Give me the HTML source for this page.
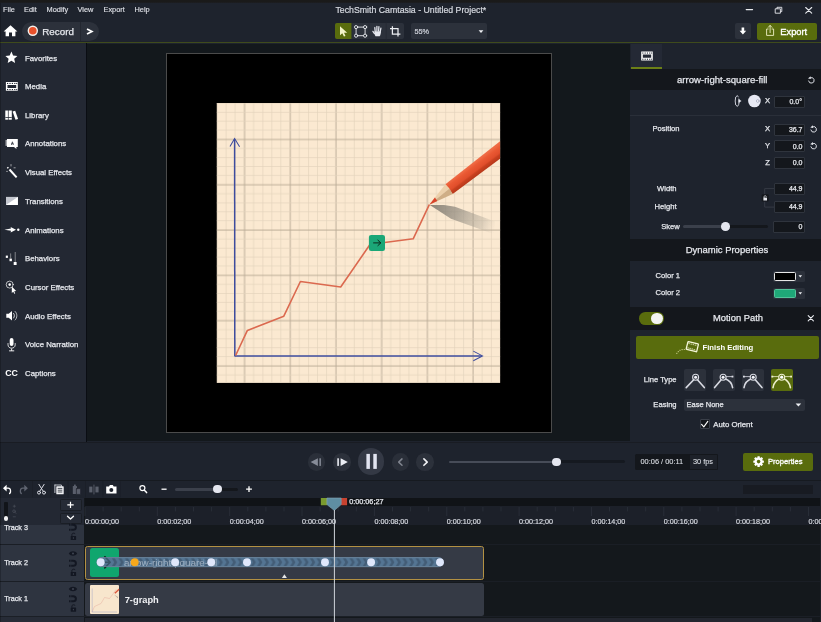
<!DOCTYPE html>
<html>
<head>
<meta charset="utf-8">
<style>
*{box-sizing:border-box;margin:0;padding:0}
html,body{width:821px;height:622px;overflow:hidden;background:#1e232d;font-family:"Liberation Sans",sans-serif;color:#eceef2}
#root{position:fixed;left:0;top:0;z-index:5;will-change:transform;width:821px;height:622px;overflow:hidden;background:#1e232d}
.a{position:absolute}
.t{position:absolute;white-space:nowrap;line-height:12px;height:12px;margin-top:-5.6px;color:#e6e8ed;-webkit-text-stroke:0.25px #e6e8ed}
.r{text-align:right}
.c{text-align:center}
svg{position:absolute;left:0;top:0;overflow:visible}
.m{font-size:7.4px;color:#dfe1e7;-webkit-text-stroke:0.12px #dfe1e7}
.sb{font-size:7.8px;left:25px;margin-top:-5.2px}
.inp{position:absolute;background:#14171c;border:1px solid #2f343d;border-radius:1px}
.lbl{font-size:7.6px}
.val{font-size:7px;text-align:right}
.rl{top:521.3px;font-size:7.2px;color:#d6d9e0;-webkit-text-stroke:0.2px #d6d9e0}
</style>
</head>
<body>
<div id="root">

<!-- ===== top bars ===== -->
<div class="a" style="left:0;top:0;width:821px;height:43px;background:#1e232d"></div>
<div class="a" style="left:0;top:0;width:821px;height:3px;background:linear-gradient(#1a1a1a,#1a1a1a 70%,#1d2027)"></div>
<div class="a" style="left:0;top:3px;width:1px;height:619px;background:rgba(0,0,0,.22);z-index:9"></div>
<div class="a" style="left:0;top:42px;width:821px;height:1px;background:#3f4b1c"></div>

<div class="t m" style="left:3px;top:9.5px">File</div>
<div class="t m" style="left:24px;top:9.5px">Edit</div>
<div class="t m" style="left:46.5px;top:9.5px">Modify</div>
<div class="t m" style="left:77.5px;top:9.5px">View</div>
<div class="t m" style="left:103.5px;top:9.5px">Export</div>
<div class="t m" style="left:134.5px;top:9.5px">Help</div>
<div class="t" style="left:335.5px;top:10px;font-size:8.76px;color:#d6d9e0;-webkit-text-stroke:0.2px #d6d9e0">TechSmith Camtasia - Untitled Project*</div>

<!-- record pill -->
<div class="a" style="left:22px;top:22px;width:77px;height:19px;border-radius:9.5px;background:#2c313b"></div>
<div class="a" style="left:80px;top:22px;width:1px;height:19px;background:#232730"></div>
<div class="t" style="left:42.3px;top:31.5px;font-size:9.8px">Record</div>

<!-- tool group -->
<div class="a" style="left:335px;top:22.500px;width:68.500px;height:16.800px;background:#2c313b;border-radius:2px"></div>
<div class="a" style="left:335px;top:22.500px;width:16.700px;height:16.800px;background:#596c0d;border-radius:2px 0 0 2px"></div>
<div class="a" style="left:410.5px;top:22.500px;width:76.5px;height:16.800px;background:#2c313b;border-radius:2px"></div>
<div class="t" style="left:414.5px;top:31.6px;font-size:7.3px;color:#cfd2da;-webkit-text-stroke:0.2px #cfd2da">55%</div>

<!-- download / export -->
<div class="a" style="left:735px;top:23px;width:16px;height:16px;background:#2c313b;border-radius:2px"></div>
<div class="a" style="left:757px;top:23px;width:59.5px;height:16.5px;background:#596c0d;border-radius:2px"></div>
<div class="t" style="left:780.3px;top:31.5px;font-size:9.3px;-webkit-text-stroke:0.35px #fff;color:#fff">Export</div>

<!-- ===== sidebar ===== -->
<div class="a" style="left:0;top:43px;width:86px;height:398.5px;background:#232833"></div>
<div class="t sb" style="top:57.7px">Favorites</div>
<div class="t sb" style="top:86.3px">Media</div>
<div class="t sb" style="top:115px">Library</div>
<div class="t sb" style="top:143.6px">Annotations</div>
<div class="t sb" style="top:172.3px">Visual Effects</div>
<div class="t sb" style="top:201px">Transitions</div>
<div class="t sb" style="top:229.7px">Animations</div>
<div class="t sb" style="top:258.3px">Behaviors</div>
<div class="t sb" style="top:287px">Cursor Effects</div>
<div class="t sb" style="top:315.7px">Audio Effects</div>
<div class="t sb" style="top:344.3px">Voice Narration</div>
<div class="t sb" style="top:373px">Captions</div>

<!-- ===== stage ===== -->
<div class="a" style="left:85.500px;top:43px;width:1.800px;height:398.5px;background:#0a0d13"></div>
<div class="a" style="left:87px;top:43.700px;width:543px;height:397.600px;background:#13181c"></div>
<div class="a" style="left:166px;top:53px;width:385.5px;height:380px;background:#000;border:1px solid #4b4b4b"></div>
<!-- ===== graph ===== -->
<svg width="821" height="622" viewBox="0 0 821 622">
<defs>
<pattern id="gv" x="244.5" y="0" width="45.7" height="10" patternUnits="userSpaceOnUse">
<rect x="-0.1" y="0" width="0.65" height="10" fill="#b9aa95"/>
<rect x="8.74" y="0" width="0.65" height="10" fill="#e2d2bb"/>
<rect x="17.88" y="0" width="0.65" height="10" fill="#e2d2bb"/>
<rect x="27.02" y="0" width="0.65" height="10" fill="#e2d2bb"/>
<rect x="36.16" y="0" width="0.65" height="10" fill="#e2d2bb"/>
<rect x="45.3" y="0" width="0.5" height="10" fill="#b9aa95"/>
</pattern>
<pattern id="gh" x="0" y="139.4" width="10" height="45.3" patternUnits="userSpaceOnUse">
<rect y="-0.1" x="0" height="0.65" width="10" fill="#b9aa95"/>
<rect y="8.66" x="0" height="0.65" width="10" fill="#e2d2bb"/>
<rect y="17.72" x="0" height="0.65" width="10" fill="#e2d2bb"/>
<rect y="26.78" x="0" height="0.65" width="10" fill="#e2d2bb"/>
<rect y="35.84" x="0" height="0.65" width="10" fill="#e2d2bb"/>
<rect y="44.9" x="0" height="0.5" width="10" fill="#b9aa95"/>
</pattern>
<linearGradient id="pb" x1="445.4" y1="184.2" x2="452.7" y2="193.9" gradientUnits="userSpaceOnUse">
<stop offset="0" stop-color="#ef6b45"/><stop offset="0.25" stop-color="#ea5933"/><stop offset="0.62" stop-color="#e04e2b"/><stop offset="0.75" stop-color="#c9411f"/><stop offset="1" stop-color="#b8381a"/>
</linearGradient>
<linearGradient id="sh" x1="431" y1="206" x2="495" y2="229" gradientUnits="userSpaceOnUse">
<stop offset="0" stop-color="#726d64" stop-opacity=".8"/><stop offset=".4" stop-color="#8f897e" stop-opacity=".68"/><stop offset=".8" stop-color="#b3aa9b" stop-opacity=".42"/><stop offset="1" stop-color="#c4baa9" stop-opacity="0"/>
</linearGradient>
<filter id="bl" x="-20%" y="-20%" width="140%" height="140%"><feGaussianBlur stdDeviation="0.7"/></filter>
<clipPath id="pc"><rect x="216.8" y="103" width="283.300" height="279.9"/></clipPath>
</defs>
<rect x="216.8" y="103" width="283.300" height="279.9" fill="#fbe9d1"/>
<rect x="216.8" y="103" width="283.300" height="279.9" fill="url(#gv)"/>
<rect x="216.8" y="103" width="283.300" height="279.9" fill="url(#gh)"/>
<g clip-path="url(#pc)">
<!-- shadow -->
<path d="M429.800 205.100 L444 204.900 L455 206.700 L495 221.600 L495 234.600 L451 218.700 Z" fill="url(#sh)" filter="url(#bl)"/>
<!-- axes -->
<path d="M234.8 356.3 L234.6 139" stroke="#3e4c9e" stroke-width="1.500" fill="none"/>
<path d="M230 146.5 L234.6 138.6 L239.6 146.8" stroke="#3e4c9e" stroke-width="1.050" fill="none"/>
<path d="M234.6 356.1 L482 355.9" stroke="#3e4c9e" stroke-width="1.500" fill="none"/>
<path d="M473.3 351.1 L482.5 355.9 L473.3 360.7" stroke="#3e4c9e" stroke-width="1.050" fill="none"/>
<!-- red line -->
<path d="M235.6 355.5 L247.4 330.4 L283.8 316.2 L300.4 281.5 L340.7 287 L370 244.5 L377 243.5 L413.2 238.8 L429.3 204.7" stroke="#db694f" stroke-width="1.6" fill="none" stroke-linejoin="round"/>
<!-- pencil -->
<path d="M445.4 184.2 L501 140.6 L501 158 L452.7 193.9 Z" fill="url(#pb)"/>
<path d="M429.3 204.7 L445.4 184.2 L449.5 188.5 Z" fill="#ecd0ab"/>
<path d="M429.3 204.7 L449.5 188.5 L452.7 193.9 Z" fill="#cfae86"/>
<path d="M429.3 204.7 L434.900 197.600 L437.300 201.100 Z" fill="#d9432a"/>
</g>
<!-- green square -->
<rect x="368.9" y="234.9" width="16.1" height="16" rx="2.2" fill="#1ba777"/>
<path d="M373.2 242.9 H380.6 M377.6 239.9 L380.8 242.9 L377.6 245.9" stroke="#0a1a12" stroke-width="0.9" fill="none"/>
</svg>
<!-- ===== right panel ===== -->
<div class="a" style="left:630px;top:43px;width:191px;height:398.5px;background:#1e232d"></div>
<div class="a" style="left:631px;top:44px;width:31px;height:24.5px;background:#242935"></div>
<div class="a" style="left:631px;top:67px;width:31px;height:1.5px;background:#6c8017"></div>
<div class="a" style="left:630px;top:69px;width:191px;height:21px;background:#14171c"></div>
<div class="t" style="left:677px;top:79.2px;font-size:9.58px">arrow-right-square-fill</div>

<div class="t lbl c" style="left:762px;width:11px;top:101px">X</div>
<div class="inp" style="left:774px;top:95.5px;width:31px;height:12px"></div>
<div class="t val" style="left:774px;width:28px;top:101.5px">0.0&#176;</div>
<div class="a" style="left:630px;top:115px;width:191px;height:1px;background:#2a2f39"></div>

<div class="t lbl" style="left:652.5px;top:129px">Position</div>
<div class="t lbl c" style="left:762px;width:11px;top:129px">X</div>
<div class="t lbl c" style="left:762px;width:11px;top:146px">Y</div>
<div class="t lbl c" style="left:762px;width:11px;top:162.3px">Z</div>
<div class="inp" style="left:774px;top:123.5px;width:31px;height:12px"></div>
<div class="inp" style="left:774px;top:140px;width:31px;height:12px"></div>
<div class="inp" style="left:774px;top:156.5px;width:31px;height:12px"></div>
<div class="t val" style="left:774px;width:28.5px;top:129.5px">36.7</div>
<div class="t val" style="left:774px;width:28.5px;top:146.3px">0.0</div>
<div class="t val" style="left:774px;width:28.5px;top:162.7px">0.0</div>

<div class="t lbl r" style="left:640px;width:36.5px;top:188.3px">Width</div>
<div class="t lbl r" style="left:640px;width:36.5px;top:206.3px">Height</div>
<div class="t lbl" style="left:661.2px;top:226.5px">Skew</div>
<div class="inp" style="left:774px;top:183px;width:31px;height:12px"></div>
<div class="inp" style="left:774px;top:200.8px;width:31px;height:12px"></div>
<div class="inp" style="left:772.5px;top:220.8px;width:32.5px;height:12px"></div>
<div class="t val" style="left:774px;width:28.5px;top:189px">44.9</div>
<div class="t val" style="left:774px;width:28.5px;top:206.8px">44.9</div>
<div class="t val" style="left:774px;width:28.5px;top:226.8px">0</div>
<!-- skew slider -->
<div class="a" style="left:683px;top:225px;width:43px;height:3px;border-radius:1.5px;background:#3b404b"></div>
<div class="a" style="left:726px;top:225px;width:42px;height:3px;border-radius:1.5px;background:#14171c"></div>
<div class="a" style="left:721px;top:222.2px;width:8.6px;height:8.6px;border-radius:50%;background:#e4e6ef"></div>

<div class="a" style="left:630px;top:239px;width:191px;height:22px;background:#14171c"></div>
<div class="t c" style="left:677px;width:100px;top:249.7px;font-size:9.47px">Dynamic Properties</div>

<div class="t lbl r" style="left:640px;width:40px;top:275.6px">Color 1</div>
<div class="t lbl r" style="left:640px;width:40px;top:292.5px">Color 2</div>
<div class="a" style="left:773px;top:270.5px;width:31.5px;height:11.5px;background:#2b303a;border-radius:1.5px"></div>
<div class="a" style="left:773px;top:287.5px;width:31.5px;height:11.5px;background:#2b303a;border-radius:1.5px"></div>
<div class="a" style="left:774.3px;top:271.7px;width:21.8px;height:9.2px;background:#000;border:1px solid #e6e6e6;border-radius:1.5px"></div>
<div class="a" style="left:774.3px;top:288.7px;width:21.8px;height:9.2px;background:#1fa878;border:1px solid #55c39b;border-radius:1.5px"></div>

<div class="a" style="left:630px;top:307px;width:191px;height:23px;background:#14171c"></div>
<div class="a" style="left:639px;top:312.3px;width:24.5px;height:12.6px;border-radius:6.3px;background:#596c0d"></div>
<div class="a" style="left:651px;top:312.8px;width:11.6px;height:11.6px;border-radius:50%;background:#f4f5f2"></div>
<div class="t c" style="left:688px;width:100px;top:317.800px;font-size:9.37px">Motion Path</div>

<div class="a" style="left:635.5px;top:336px;width:183px;height:23px;border-radius:2px;background:#596c0d"></div>
<div class="t" style="left:702.5px;top:347.6px;font-size:7.7px;font-weight:bold;color:#fff;-webkit-text-stroke:0">Finish Editing</div>

<div class="t lbl" style="left:643.8px;top:379.7px">Line Type</div>
<div class="a" style="left:683.7px;top:369px;width:22.5px;height:22px;border-radius:2px;background:#2c313b"></div>
<div class="a" style="left:712.7px;top:369px;width:22.5px;height:22px;border-radius:2px;background:#2c313b"></div>
<div class="a" style="left:741.6px;top:369px;width:22.5px;height:22px;border-radius:2px;background:#2c313b"></div>
<div class="a" style="left:770.5px;top:369px;width:22.5px;height:22px;border-radius:2px;background:#596c0d"></div>

<div class="t lbl r" style="left:640px;width:36.6px;top:404.8px">Easing</div>
<div class="a" style="left:683.5px;top:399px;width:121px;height:11.8px;border-radius:2px;background:#2c313b"></div>
<div class="t" style="left:686.6px;top:405px;font-size:7.5px">Ease None</div>
<div class="a" style="left:699.6px;top:419.3px;width:10px;height:10px;border-radius:1px;background:#14171c;border:1px solid #3a3f49"></div>
<div class="t" style="left:713.2px;top:424.3px;font-size:7.8px">Auto Orient</div>
<!-- ===== playback bar ===== -->
<div class="a" style="left:0;top:441.5px;width:821px;height:56.5px;background:#1e232d"></div>
<div class="a" style="left:0;top:480px;width:821px;height:1px;background:#161a20"></div>
<div class="a" style="left:0;top:441.5px;width:821px;height:1px;background:#191c23"></div>
<div class="a" style="left:307.5px;top:453px;width:17.6px;height:17.6px;border-radius:50%;background:#2a2f39"></div>
<div class="a" style="left:333.1px;top:453px;width:17.6px;height:17.6px;border-radius:50%;background:#2c313b"></div>
<div class="a" style="left:357.7px;top:448px;width:26.8px;height:26.8px;border-radius:50%;background:#343945"></div>
<div class="a" style="left:391.6px;top:453px;width:17.6px;height:17.6px;border-radius:50%;background:#2a2f39"></div>
<div class="a" style="left:416.4px;top:453px;width:17.6px;height:17.6px;border-radius:50%;background:#2c313b"></div>
<div class="a" style="left:449.3px;top:460.600px;width:107px;height:2.400px;border-radius:1.200px;background:#474c58"></div>
<div class="a" style="left:556px;top:460.300px;width:68.5px;height:3px;border-radius:1.500px;background:#151920"></div>
<div class="a" style="left:552.1px;top:457.5px;width:8.6px;height:8.6px;border-radius:50%;background:#e4e6ef"></div>

<div class="a" style="left:635px;top:454px;width:83px;height:15.6px;background:#14171c;border-radius:1.5px"></div>
<div class="a" style="left:689px;top:454px;width:29px;height:15.6px;background:#1d2129;border:1px solid #14171c;border-radius:0 1.5px 1.5px 0"></div>
<div class="t" style="left:640.5px;top:462px;font-size:7.4px;color:#dcdfe5;-webkit-text-stroke:0.1px #dcdfe5">00:06 / 00:11</div>
<div class="t" style="left:692.9px;top:462px;font-size:7.4px;color:#dcdfe5;-webkit-text-stroke:0.1px #dcdfe5">30 fps</div>
<div class="a" style="left:742.8px;top:452.5px;width:70.2px;height:18.3px;border-radius:2px;background:#596c0d"></div>
<div class="t" style="left:767.9px;top:461.2px;font-size:7.6px;color:#fff;-webkit-text-stroke:0.3px #fff">Properties</div>
<div class="a" style="left:742.8px;top:485px;width:70.2px;height:8.5px;background:#181b22"></div>

<!-- timeline toolbar -->
<div class="a" style="left:175px;top:487.7px;width:43px;height:3px;border-radius:1.5px;background:#3b404b"></div>
<div class="a" style="left:218px;top:487.7px;width:20px;height:3px;border-radius:1.5px;background:#14171c"></div>
<div class="a" style="left:213.4px;top:484.7px;width:8.6px;height:8.6px;border-radius:50%;background:#e4e6ef"></div>

<!-- ===== timeline ===== -->
<div class="a" style="left:0;top:497.5px;width:821px;height:124.5px;background:#14181c"></div>
<div class="a" style="left:85px;top:497.5px;width:736px;height:8px;background:#101317"></div>
<div class="a" style="left:85px;top:505.500px;width:736px;height:19.600px;background:#1c2029"></div>
<div class="a" style="left:0;top:524px;width:83.800px;height:98px;background:#2e3440"></div>
<div class="a" style="left:0;top:617px;width:83.800px;height:5px;background:#272c37"></div>
<div class="t" style="left:4.200px;top:527.200px;font-size:7.200px">Track 3</div>
<div class="a" style="left:0;top:497.5px;width:84px;height:27px;background:#232833"></div>
<div class="a" style="left:0;top:544.3px;width:821px;height:1.2px;background:#1a1e25"></div>
<div class="a" style="left:0;top:580.6px;width:821px;height:1.2px;background:#1a1e25"></div>
<div class="a" style="left:0;top:615.900px;width:821px;height:1.500px;background:#1b1f26"></div>
<div class="a" style="left:85px;top:618.300px;width:727px;height:4px;background:#23262f"></div>
<div class="a" style="left:819.500px;top:497.500px;width:1.500px;height:125px;background:#1d2027"></div>
<!-- + / v buttons -->
<div class="a" style="left:59.7px;top:499.3px;width:22px;height:11.6px;background:#262b36;border:1px solid #1a1e25;border-radius:1.5px"></div>
<div class="a" style="left:59.7px;top:512.5px;width:22px;height:11.3px;background:#262b36;border:1px solid #1a1e25;border-radius:1.5px"></div>
<div class="a" style="left:4.200px;top:501.5px;width:3.400px;height:18px;background:#111419;border-radius:1px"></div>
<div class="a" style="left:3.700px;top:516.200px;width:4.500px;height:4.500px;border-radius:50%;background:#f2f2f4"></div>

<div class="t" style="left:4.200px;top:562.6px;font-size:7.200px">Track 2</div>
<div class="t" style="left:4.200px;top:598.2px;font-size:7.200px">Track 1</div>

<!-- ruler labels -->
<div class="t rl" style="left:85.0px">0:00:00;00</div>
<div class="t rl" style="left:157.3px">0:00:02;00</div>
<div class="t rl" style="left:229.7px">0:00:04;00</div>
<div class="t rl" style="left:302.0px">0:00:06;00</div>
<div class="t rl" style="left:374.4px">0:00:08;00</div>
<div class="t rl" style="left:446.8px">0:00:10;00</div>
<div class="t rl" style="left:519.1px">0:00:12;00</div>
<div class="t rl" style="left:591.4px">0:00:14;00</div>
<div class="t rl" style="left:663.8px">0:00:16;00</div>
<div class="t rl" style="left:736.1px">0:00:18;00</div>
<div class="t rl" style="left:808.5px">0:00:20;00</div>
<div class="t" style="left:349.2px;top:501.8px;font-size:7.25px">0:00:06;27</div>

<!-- clips -->
<div class="a" style="left:85.3px;top:582.6px;width:398.5px;height:33.2px;background:#353a45;border-radius:2.5px"></div>
<div class="a" style="left:85.3px;top:546.2px;width:398.5px;height:33.6px;background:#353a45;border:1px solid #b39143;border-radius:2.5px"></div>
<div class="a" style="left:90.1px;top:548px;width:29.3px;height:28.6px;background:#10a66e;border-radius:2.500px"></div>
<div class="a" style="left:90.1px;top:584.6px;width:29.3px;height:29.2px;background:#f8e6cd;border-radius:1px"></div>
<div class="t" style="left:124.7px;top:599.3px;font-size:9.3px;font-weight:bold;-webkit-text-stroke:0;color:#f0f1f4">7-graph</div>
<!-- animation bar -->
<div class="a" style="left:97.4px;top:557.3px;width:345px;height:10px;border-radius:5px;background:#4a6076"></div>
<div class="t" style="left:123.5px;top:562.4px;font-size:8.6px;color:#8295a8;-webkit-text-stroke:0">arrow-right-square-fill</div>
<!-- ===== icons overlay ===== -->
<svg width="821" height="622" viewBox="0 0 821 622" fill="none" stroke-linecap="round" stroke-linejoin="round">
<!-- window controls -->
<path d="M746.2 9.6 H752.6" stroke="#e8eaee" stroke-width="1.1"/>
<path d="M775.6 8.8 H780.4 V13.2 H775.6 Z M777 8.6 V7.3 H781.8 V11.6 H780.6" stroke="#e8eaee" stroke-width="0.9"/>
<path d="M805.7 7.5 L811.7 13.1 M811.7 7.5 L805.7 13.1" stroke="#e8eaee" stroke-width="1.1"/>
<!-- home -->
<path d="M10.5 25.3 L3.6 31.4 H5.6 V36.2 H9 V32.6 H12 V36.2 H15.4 V31.4 H17.4 Z" fill="#fff" stroke="none"/>
<!-- record dot -->
<circle cx="32.8" cy="30.8" r="5.200" fill="#f4f0ec" stroke="none"/>
<circle cx="32.8" cy="30.8" r="3.800" fill="#e8512b" stroke="none"/>
<path d="M87 28.900 L91.900 31.400 L87 33.900" stroke="#fff" stroke-width="1.700" stroke-linejoin="miter" stroke-linecap="butt"/>
<!-- tools -->
<path d="M340 26.2 L340 35.2 L342.3 33.3 L343.9 36.6 L345.5 35.9 L344 32.7 L347.2 32.7 Z" fill="#f3f4c8" stroke="none"/>
<g stroke="#eceef2" stroke-width="0.9">
<path d="M357.9 27.1 H363.3 M357.9 35.7 H363.3 M356.1 28.9 V33.9 M365.1 28.9 V33.9"/>
<circle cx="356.1" cy="27.1" r="1.6"/><circle cx="365.1" cy="27.1" r="1.6"/><circle cx="356.1" cy="35.7" r="1.6"/><circle cx="365.1" cy="35.7" r="1.6"/>
</g>
<g stroke="#e6e8ef" stroke-width="1.250" stroke-linecap="round">
<path d="M375.200 31.600 L374.800 27.500 M376.900 31 V26.300 M378.600 31 L378.900 26.700 M380.200 31.800 L380.900 28.200 M374.500 33.600 L372.900 31.300"/>
</g>
<path d="M374.500 31.200 H380.900 C381 33.300 380.500 34.900 379.700 36.300 H375.500 C374.600 35 374.400 33.300 374.500 31.200 Z" fill="#e6e8ef" stroke="none"/>
<path d="M392.4 26.2 V34 H400.4 M390 28.5 H398 V36.4" stroke="#eceef2" stroke-width="1.25" stroke-linecap="butt" stroke-linejoin="miter"/>
<path d="M351.800 22.700 V39.200 M369.100 22.700 V39.200 M386.200 22.700 V39.200" stroke="#252a33" stroke-width="0.8"/>
<path d="M478.6 30.2 H483.4 L481 32.9 Z" fill="#eceef2" stroke="none"/>
<!-- download / export -->
<path d="M741.6 27.6 H744.2 V30.8 H746.2 L742.9 34.6 L739.6 30.8 H741.6 Z" fill="#fff" stroke="none"/>
<path d="M768.2 29 H766.6 V35.4 H773.6 V29 H772 M770.1 32.6 V25.6 M768.3 27.3 L770.1 25.4 L771.9 27.3" stroke="#eef0c4" stroke-width="0.9"/>

<!-- sidebar icons -->
<g fill="#fff" stroke="none">
<path d="M11.4 51.6 L13.1 55.6 L17.4 56 L14.2 58.8 L15.1 63 L11.4 60.8 L7.7 63 L8.6 58.800 L5.4 56 L9.7 55.6 Z"/>
<!-- media -->
<path d="M5.9 82.100 H17.8 V90.800 H5.900 Z M7.500 85 V88 H16.200 V85 Z" fill-rule="evenodd"/>
<g fill="#232833"><rect x="7" y="82.900" width="1.200" height="1.100"/><rect x="9.400" y="82.900" width="1.200" height="1.100"/><rect x="11.800" y="82.900" width="1.200" height="1.100"/><rect x="14.200" y="82.900" width="1.200" height="1.100"/><rect x="16.200" y="82.900" width="1" height="1.100"/>
<rect x="7" y="89" width="1.200" height="1.100"/><rect x="9.400" y="89" width="1.200" height="1.100"/><rect x="11.800" y="89" width="1.200" height="1.100"/><rect x="14.200" y="89" width="1.200" height="1.100"/><rect x="16.200" y="89" width="1" height="1.100"/></g>
<!-- library -->
<rect x="5.300" y="110.500" width="2.600" height="9.200"/><rect x="8.600" y="110.500" width="3.200" height="9.200"/>
<path d="M12.600 111.600 L15.200 110.800 L18.100 118.900 L15.500 119.700 Z"/>
<rect x="5.300" y="117" width="6.500" height="0.800" fill="#232833"/>
<!-- annotations -->
<path d="M7 139.100 H17.800 V147 H16.300 L16.500 149 L14 147 H7 Z"/>
<rect x="5.700" y="139.900" width="0.900" height="6" />
<!-- transitions -->
<rect x="6" y="196.900" width="11.900" height="8" fill="#d9dbe1"/>
<path d="M6 204.900 L17.900 196.900 H6 Z" fill="#c3c6ce"/>
<path d="M6 204.900 L17.900 196.900 V204.900 Z" fill="#fff"/>
<!-- animations -->
<path d="M4.400 229.700 L11 228.600 L10.600 226.900 L16 229.700 L10.600 232.500 L11 230.800 Z"/>
<circle cx="18.300" cy="229.700" r="1.200"/>
<!-- behaviors -->
<rect x="5.800" y="255.600" width="2.100" height="2.300"/><rect x="9.500" y="258.600" width="2.400" height="2.600"/><rect x="13.700" y="262" width="2.900" height="3"/>
<rect x="10.400" y="253.400" width="0.700" height="5" opacity=".6"/><rect x="14.800" y="252" width="0.700" height="10" opacity=".6"/>
<!-- audio -->
<path d="M6.300 313.700 H8.700 L12 311 V320.400 L8.700 317.700 H6.300 Z"/>
<!-- mic -->
<rect x="9.700" y="338" width="3.800" height="8" rx="1.900"/>
<rect x="11.200" y="348.600" width="0.900" height="2.200"/><rect x="9.100" y="350.400" width="5.100" height="0.900"/>
</g>
<g stroke="#fff">
<!-- annotation letter -->
<path d="M11.500 144.600 L12.400 141.800 L13.300 144.600 M11.800 143.700 H13" stroke="#232833" stroke-width="0.700"/>
<!-- wand -->
<path d="M9.500 169.500 L16.600 177.300" stroke-width="2" stroke-linecap="butt"/>
<path d="M7.400 167.200 L8.300 168.200" stroke-width="1.600" stroke-linecap="butt"/>
<path d="M11 164.500 V166 M14 167.800 H15.200 M6.600 171.400 H7.400" stroke-width="0.700" opacity=".8"/>
<!-- cursor effects -->
<circle cx="9.700" cy="284.600" r="3.500" stroke-width="0.800" opacity=".85"/>
<circle cx="9.700" cy="284.600" r="1.300" fill="#fff" stroke="none"/>
<path d="M11.800 286.600 V293 L13.300 291.700 L14.300 293.800 L15.200 293.400 L14.200 291.300 L16.200 291.100 Z" fill="#fff" stroke="none"/>
<!-- audio waves -->
<path d="M13.600 313.400 C14.700 314.600 14.700 316.800 13.600 318" stroke-width="0.800"/>
<path d="M15.100 311.400 C17.500 313.600 17.500 317.800 15.100 320" stroke-width="0.800" opacity=".85"/>
<!-- mic arc -->
<path d="M8 343.500 V344.800 C8 349.300 15.200 349.300 15.200 344.800 V343.500" stroke-width="0.800"/>
</g>
<text x="5.200" y="376.100" font-family="Liberation Sans, sans-serif" font-weight="bold" font-size="8.800" fill="#fff" stroke="none" textLength="12.800" lengthAdjust="spacingAndGlyphs">CC</text>
</svg>
<svg width="821" height="622" viewBox="0 0 821 622" fill="none" stroke-linecap="round" stroke-linejoin="round">
<!-- ===== right panel icons ===== -->
<!-- film tab icon -->
<g fill="#fff" stroke="none">
<path d="M641.2 51.600 H652.800 V60.600 H641.200 Z M642.800 54.600 V57.700 H651.200 V54.600 Z" fill-rule="evenodd"/>
<g fill="#242935"><rect x="642.300" y="52.500" width="1.100" height="1.100"/><rect x="644.600" y="52.500" width="1.100" height="1.100"/><rect x="646.900" y="52.500" width="1.100" height="1.100"/><rect x="649.200" y="52.500" width="1.100" height="1.100"/><rect x="651.200" y="52.500" width="0.900" height="1.100"/>
<rect x="642.300" y="58.700" width="1.100" height="1.100"/><rect x="644.600" y="58.700" width="1.100" height="1.100"/><rect x="646.900" y="58.700" width="1.100" height="1.100"/><rect x="649.200" y="58.700" width="1.100" height="1.100"/><rect x="651.200" y="58.700" width="0.900" height="1.100"/></g>
</g>
<!-- reset icons -->
<path d="M810.4 77.7 A2.8 2.8 0 1 1 808.6 81.0" stroke="#e4e6ec" stroke-width="0.950" fill="none"/><path d="M808.0 78.4 L810.6 76.2 L810.8 79.1 Z" fill="#e4e6ec" stroke="none"/>
<path d="M812.7 126.7 A2.8 2.8 0 1 1 810.9 130.0" stroke="#e4e6ec" stroke-width="0.950" fill="none"/><path d="M810.3 127.4 L812.9 125.2 L813.1 128.1 Z" fill="#e4e6ec" stroke="none"/>
<path d="M812.7 143.5 A2.8 2.8 0 1 1 810.9 146.8" stroke="#e4e6ec" stroke-width="0.950" fill="none"/><path d="M810.3 144.2 L812.9 142.0 L813.1 144.9 Z" fill="#e4e6ec" stroke="none"/>
<!-- rotation -->
<ellipse cx="737.200" cy="101" rx="2" ry="5.300" stroke="#dfe1ea" stroke-width="0.900"/>
<path d="M738.500 98.900 L741.500 101 L738.500 103.100 Z" fill="#e4e6ee" stroke="none"/>
<rect x="738.300" y="96.600" width="2.600" height="2.200" fill="#1e232d" stroke="none"/>
<circle cx="754.400" cy="101" r="6.300" fill="#e6e8f3" stroke="none"/>
<circle cx="757.800" cy="101" r="1.350" fill="#fdfdff" stroke="#9fa4ba" stroke-width="0.800"/>
<!-- lock bracket -->
<path d="M774 188.600 H764.700 V194 M764.700 201.600 V207.100 H774" stroke="#3b404a" stroke-width="0.800" stroke-linecap="butt" stroke-linejoin="miter"/>
<rect x="761.700" y="194.200" width="7" height="7.300" rx="1" fill="#14171c" stroke="none"/>
<rect x="763.400" y="197.600" width="3.600" height="2.900" fill="#e4e6ec" stroke="none"/>
<path d="M764.100 197.600 V196.600 C764.100 195.300 766.300 195.300 766.300 196.600" stroke="#e4e6ec" stroke-width="0.700"/>
<!-- color dropdown carets -->
<path d="M798.500 275.200 H802.100 L800.300 277.400 Z M798.500 292.200 H802.100 L800.300 294.400 Z" fill="#eceef2" stroke="none"/>
<!-- close motion path -->
<path d="M808.200 315.600 L813.400 320.800 M813.400 315.600 L808.200 320.800" stroke="#eceef2" stroke-width="1.100"/>
<!-- finish editing icon -->
<g transform="rotate(14 692.300 346.700)">
<rect x="686.900" y="342.700" width="10.800" height="8" rx="0.600" stroke="#f4f6d8" stroke-width="1.300"/>
<path d="M688 344.500 H696.600 M688 349 H696.600" stroke="#f4f6d8" stroke-width="1.100" stroke-dasharray="1 1.100" stroke-linecap="butt"/>
</g>
<path d="M676.800 353.400 C678.500 350.600 681.500 349 685 349.600" stroke="#d7dc9a" stroke-width="1.100" stroke-dasharray="0.100 2.100"/>
<!-- line type icons -->
<g stroke="#d9dbe3" stroke-width="1.600">
<path d="M694.200 379.200 L686.200 387.600 M697 379.200 L704.300 387.600"/>
<path d="M721.600 379.200 L714.600 387.600 M724.800 378.600 C729.500 380.400 732 383.800 732.600 387.600"/>
<path d="M751.800 378.600 C747.200 380.400 744.600 383.800 744 387.600 M754.800 379.200 L762 387.600"/>
</g>
<g stroke="#d9dbe3" stroke-width="0.800">
<path d="M725.800 376.600 H732"/><path d="M750.600 376.600 H744.400"/>
</g>
<rect x="731.600" y="375.700" width="1.800" height="1.800" fill="#d9dbe3"/><rect x="743" y="375.700" width="1.800" height="1.800" fill="#d9dbe3"/>
<g stroke="#d9dbe3" stroke-width="1.100" fill="#2c313b">
<circle cx="695.600" cy="377.200" r="3"/><circle cx="723.100" cy="377.200" r="3"/><circle cx="753.200" cy="377.200" r="3"/>
</g>
<circle cx="695.600" cy="377.200" r="1.500" fill="#f4f5fa"/><circle cx="723.100" cy="377.200" r="1.500" fill="#f4f5fa"/><circle cx="753.200" cy="377.200" r="1.500" fill="#f4f5fa"/>
<g stroke="#eef0cf" stroke-width="1.600">
<path d="M780.200 378.600 C775.600 380.400 773.600 383.800 773 387.600 M783.200 378.600 C787.800 380.400 789.800 383.800 790.400 387.600"/>
</g>
<path d="M772.400 376.600 H779 M784.400 376.600 H791" stroke="#eef0cf" stroke-width="0.800"/>
<rect x="771.400" y="375.700" width="1.800" height="1.800" fill="#eef0cf"/><rect x="790.200" y="375.700" width="1.800" height="1.800" fill="#eef0cf"/>
<circle cx="781.700" cy="377.200" r="3" stroke="#eef0cf" stroke-width="1.100" fill="#596c0d"/>
<circle cx="781.700" cy="377.200" r="1.600" fill="#fff"/>
<!-- easing caret, checkbox tick -->
<path d="M795.600 403.600 H801.200 L798.400 406.600 Z" fill="#eceef2" stroke="none"/>
<path d="M701.600 424.400 L703.800 426.800 L707.800 421.400" stroke="#fff" stroke-width="1.100"/>

<!-- ===== playback icons ===== -->
<path d="M317.900 458.300 V465.900 L310.600 462.100 Z" fill="#878c98" stroke="none"/><rect x="319.400" y="458.300" width="1.500" height="7.600" fill="#878c98" stroke="none"/>
<path d="M340.600 458.300 V465.900 L347.800 462.100 Z" fill="#eceef4" stroke="none"/><rect x="337.300" y="458.300" width="1.600" height="7.600" fill="#eceef4" stroke="none"/>
<rect x="366.400" y="453.900" width="3.500" height="15" fill="#e2e4f0" stroke="none"/><rect x="373.300" y="453.900" width="3.500" height="15" fill="#e2e4f0" stroke="none"/>
<path d="M402 458.900 L398.700 462.100 L402 465.300" stroke="#80858f" stroke-width="1.500"/>
<path d="M423.900 458.900 L427.200 462.100 L423.900 465.300" stroke="#f2f3f6" stroke-width="1.600"/>
<!-- gear -->
<g transform="translate(758.600 461.600)">
<g fill="#fff" stroke="none">
<rect x="-1.200" y="-5.300" width="2.400" height="10.600" rx="0.500"/>
<rect x="-1.200" y="-5.300" width="2.400" height="10.600" rx="0.500" transform="rotate(45)"/>
<rect x="-1.200" y="-5.300" width="2.400" height="10.600" rx="0.500" transform="rotate(90)"/>
<rect x="-1.200" y="-5.300" width="2.400" height="10.600" rx="0.500" transform="rotate(135)"/>
<circle r="4"/>
</g>
<circle r="1.800" fill="#596c0d" stroke="none"/>
</g>

<!-- ===== timeline toolbar icons ===== -->
<path d="M32.500 481.500 V497 M50.700 481.500 V497 M68.100 481.500 V497 M85.500 481.500 V497 M102.900 481.500 V497 M120.300 481.500 V497" stroke="#1a1e26" stroke-width="0.700"/>
<!-- undo -->
<path d="M4.300 488.200 H8.200 C11.200 488.200 11.200 493.400 9 493.600" stroke="#fff" stroke-width="1.250" stroke-linecap="butt"/>
<path d="M6.600 484.800 L3 488.200 L6.600 491.600 Z" fill="#fff" stroke="none"/>
<!-- redo -->
<path d="M26.600 488.200 H22.700 C19.700 488.200 19.700 493.400 21.900 493.600" stroke="#5f6470" stroke-width="1.250" stroke-linecap="butt"/>
<path d="M24.300 484.800 L27.900 488.200 L24.300 491.600 Z" fill="#5f6470" stroke="none"/>
<!-- scissors -->
<g stroke="#dcdee6" stroke-width="1">
<path d="M38.900 484.400 L43.200 491.200 M44.100 484.400 L39.800 491.200"/>
<circle cx="39" cy="492.600" r="1.500"/><circle cx="44" cy="492.600" r="1.500"/>
</g>
<!-- copy -->
<path d="M54.900 485 H61.400 V486.300" stroke="#cfd2da" stroke-width="0.900"/>
<rect x="56.300" y="486.300" width="7.400" height="8" rx="0.600" fill="#f2f3f6" stroke="none"/>
<path d="M57.700 488.400 H62.300 M57.700 490.200 H62.300 M57.700 492 H62.300" stroke="#1e232d" stroke-width="0.800" stroke-linecap="butt"/>
<path d="M54.900 485 V492.600" stroke="#cfd2da" stroke-width="0.900"/>
<!-- paste (dim) -->
<g fill="#5a5f6b" stroke="none">
<rect x="72.800" y="486" width="4.200" height="8" rx="0.500"/><rect x="74" y="484.600" width="1.800" height="1.800"/>
<rect x="76.400" y="488.600" width="4.200" height="5.800" rx="0.400" stroke="#1e232d" stroke-width="0.700"/>
</g>
<!-- split (dim) -->
<g fill="#5a5f6b" stroke="none">
<rect x="89.200" y="486.600" width="3.200" height="5.800"/><rect x="95.400" y="486.600" width="3.200" height="5.800"/><rect x="93.500" y="484.600" width="0.900" height="9.800"/>
</g>
<!-- camera -->
<path d="M106.200 486.400 H109 L109.900 485.100 H112.800 L113.700 486.400 H116.500 V493.600 H106.200 Z" fill="#fff" stroke="none"/>
<circle cx="111.300" cy="489.900" r="2" fill="#1e232d" stroke="none"/>
<!-- magnifier, minus, plus -->
<circle cx="142.400" cy="488.100" r="2.500" stroke="#fff" stroke-width="1.200"/>
<path d="M144.400 490.200 L146.600 492.600" stroke="#fff" stroke-width="1.500"/>
<path d="M161.500 489.200 H166.600" stroke="#fff" stroke-width="1.300" stroke-linecap="butt"/>
<path d="M246.100 489.200 H251.900 M249 486.300 V492.100" stroke="#fff" stroke-width="1.300" stroke-linecap="butt"/>
<!-- + / v -->
<path d="M67.300 504.900 H73.700 M70.500 501.700 V508.100" stroke="#fff" stroke-width="1.200" stroke-linecap="butt"/>
<path d="M67.500 516.300 L70.500 519.100 L73.500 516.300" stroke="#fff" stroke-width="1.300"/>
<!-- small dim icons -->
<g stroke="#4a4f5a" stroke-width="0.700">
<path d="M13.200 506.200 H15.400 M14.300 505.100 V507.300 M13.200 516.800 H15.400"/>
<circle cx="14" cy="511.200" r="1.300"/><path d="M15 512.300 L16 513.400"/>
</g>

<!-- ===== track icons ===== -->
<g id="ti">
<path d="M68.800 553.500 C70.600 550.500 75.400 550.500 77.200 553.500 C75.400 556.500 70.600 556.500 68.800 553.500 Z" fill="#131722" stroke="none"/>
<circle cx="73" cy="553.500" r="1" fill="#3f4552" stroke="none"/>
<g id="mg">
<path d="M69 560.700 H73.200 C76.800 560.700 76.800 565.700 73.200 565.700 H69" stroke="#131722" stroke-width="2" stroke-linecap="butt" fill="none"/>
<path d="M70.800 559.500 V567" stroke="#2e3440" stroke-width="0.600"/>
<g id="lk">
<rect x="70.700" y="571.900" width="5.400" height="4.200" rx="0.400" fill="#131722" stroke="none"/>
<path d="M71.900 571.900 V570.500 C71.900 568.800 75 568.800 75 570.100" stroke="#131722" stroke-width="1" fill="none" stroke-linecap="butt"/>
<rect x="72.900" y="573.300" width="1" height="1.400" fill="#3f4552" stroke="none"/>
</g>
</g>
</g>
<use href="#ti" y="35.600"/>
<use href="#mg" y="-36"/>
<!-- ===== ruler ticks ===== -->
<g stroke="#2c313b" stroke-width="0.800" stroke-linecap="butt"><path d="M85.0 507 V516 M103.1 507 V511.4 M121.2 507 V511.4 M139.3 507 V511.4 M157.3 507 V516 M175.4 507 V511.4 M193.5 507 V511.4 M211.6 507 V511.4 M229.7 507 V516 M247.8 507 V511.4 M265.9 507 V511.4 M284.0 507 V511.4 M302.0 507 V516 M320.1 507 V511.4 M338.2 507 V511.4 M356.3 507 V511.4 M374.4 507 V516 M392.5 507 V511.4 M410.6 507 V511.4 M428.7 507 V511.4 M446.8 507 V516 M464.8 507 V511.4 M482.9 507 V511.4 M501.0 507 V511.4 M519.1 507 V516 M537.2 507 V511.4 M555.3 507 V511.4 M573.4 507 V511.4 M591.4 507 V516 M609.5 507 V511.4 M627.6 507 V511.4 M645.7 507 V511.4 M663.8 507 V516 M681.9 507 V511.4 M700.0 507 V511.4 M718.1 507 V511.4 M736.1 507 V516 M754.2 507 V511.4 M772.3 507 V511.4 M790.4 507 V511.4 M808.5 507 V516"/></g>
</svg>
<svg width="821" height="622" viewBox="0 0 821 622" fill="none">
<defs>
<pattern id="chev" x="98" y="557.300" width="6.600" height="10" patternUnits="userSpaceOnUse">
<path d="M0.300 0.500 H3.300 L6.100 5 L3.300 9.500 H0.300 L3.100 5 Z" fill="#34485f" fill-opacity=".55"/>
</pattern>
<clipPath id="barclip"><rect x="96.500" y="557.200" width="347" height="9.900" rx="4.900"/></clipPath>
</defs>
<!-- thumbnail arrow in green -->
<path d="M99 562.300 H110 M104.900 556.800 L110.200 562.300 L104.900 567.800" stroke="#0a130e" stroke-width="1.600" stroke-linecap="round" stroke-linejoin="round"/>
<!-- bar -->
<rect x="96.500" y="557.200" width="347" height="9.900" rx="4.900" fill="#5c84a8" fill-opacity=".58"/>
<rect x="112" y="558.200" width="330" height="7.900" fill="url(#chev)" clip-path="url(#barclip)"/>
<text x="124" y="565.700" font-family="Liberation Sans, sans-serif" font-size="9.900" fill="#a9b8c8" fill-opacity=".85" clip-path="url(#barclip)">arrow-right-square-fill</text>
<rect x="96.900" y="557.600" width="346.200" height="9.100" rx="4.500" stroke="#6d849b" stroke-width="0.800"/>
<!-- keyframes -->
<g fill="#dfe7fb">
<circle cx="100.700" cy="562.300" r="3.950"/><circle cx="175.100" cy="562.300" r="3.950"/><circle cx="211.200" cy="562.300" r="3.950"/><circle cx="247" cy="562.300" r="3.950"/><circle cx="325" cy="562.300" r="3.950"/><circle cx="371.100" cy="562.300" r="3.950"/><circle cx="440" cy="562.300" r="3.950"/>
</g>
<circle cx="134.700" cy="562.300" r="3.950" fill="#f6a81c"/>
<path d="M281.900 578 L284.400 574.300 L286.900 578 Z" fill="#e6e6e6"/>
<!-- track1 thumbnail content -->
<path d="M92 612 L94.500 606.500 L101 603.500 L104.500 597.500 L109.500 598.500 L113 594 L116 589.500" stroke="#eab9a8" stroke-width="0.600"/>
<path d="M114.300 592.800 L118.900 588.600 L119.400 590.100 L115.300 593.800 Z" fill="#dc5a3e"/>
<path d="M114 594.600 L118 597 L118 598.400 Z" fill="#8c8377" fill-opacity=".6"/>
<path d="M92.200 612 V588.500 M92 612 H117" stroke="#8a93c4" stroke-width="0.400"/>
<!-- playhead -->
<rect x="320.800" y="498" width="6.200" height="7.300" fill="#7a9a2e"/>
<rect x="341.100" y="498" width="6" height="7.300" fill="#c8422f"/>
<path d="M326.900 498 H341.200 V504.600 L334.300 510.400 L326.900 504.600 Z" fill="#5f8ea3" stroke="#86aabb" stroke-width="0.600"/>
<rect x="333.900" y="510" width="1" height="112" fill="#cfd3da"/>
</svg>
</div>
</body>
</html>
